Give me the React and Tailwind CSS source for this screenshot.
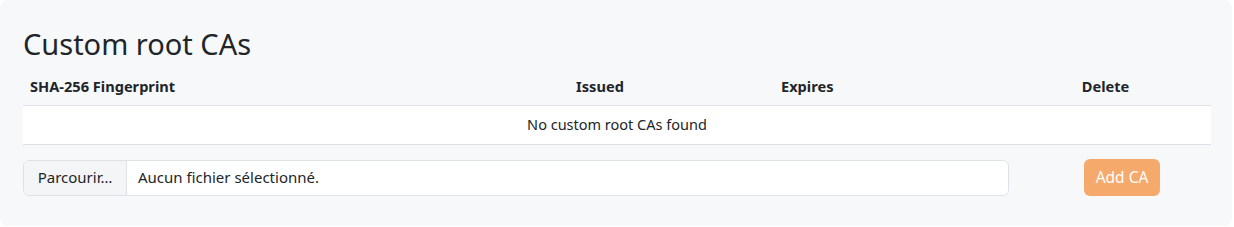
export default function App() {
  return (
    <div className="w-[1234px] h-[227px] bg-white" style={{ fontFamily: '"Noto Sans", sans-serif' }}>
      <div className="w-[1232px] h-[226px] bg-[#f7f8fa] rounded-lg px-[23px] pt-[26px]">
        <h2 className="text-[29px] leading-[36px] text-[#212529] font-normal mb-[6px]">Custom root CAs</h2>

        {/* Table */}
        <div className="w-[1188px] text-[14.5px] text-[#212529]">
          <div className="grid grid-cols-[477px_200px_300px_211px] h-[38px] items-center text-[14.6px] font-bold border-b border-[#dee2e6]">
            <div className="pl-[7px]">SHA-256 Fingerprint</div>
            <div className="text-center">Issued</div>
            <div className="pl-[81px]">Expires</div>
            <div className="text-center">Delete</div>
          </div>
          <div className="h-[39px] bg-white flex items-center justify-center border-b border-[#dee2e6]">
            No custom root CAs found
          </div>
        </div>

        {/* Upload */}
        <div className="flex items-center mt-[14px] text-[15px] text-[#212529]">
          <div className="w-[986px] h-[36px] flex border border-[#dee2e6] rounded-md overflow-hidden bg-white">
            <div className="w-[103px] bg-[#f4f5f7] border-r border-[#dee2e6] flex items-center justify-center">Parcourir…</div>
            <div className="flex items-center pl-[11px]">Aucun fichier sélectionné.</div>
          </div>
          <button className="ml-[75px] w-[76px] h-[37px] rounded-md bg-[#f5a96b] text-white text-[15.5px]">Add CA</button>
        </div>
      </div>
    </div>
  );
}
